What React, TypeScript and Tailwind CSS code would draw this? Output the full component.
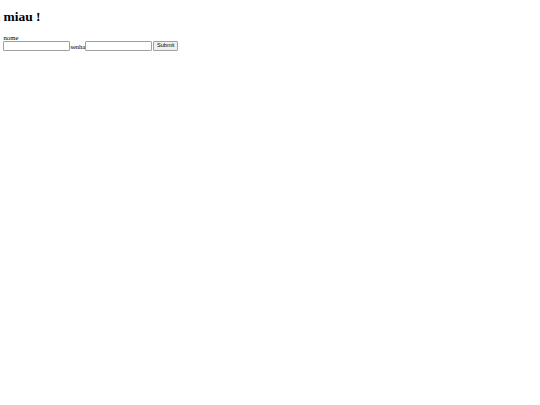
export default function App() {
  return (
    <div className="min-h-[405px] w-[540px] bg-white px-[3.4px] pt-[9px] font-['Liberation_Serif',serif] text-black">
      <h1 className="text-[13.5px] font-bold leading-[15.5px]">miau !</h1>
      <form className="mt-[9px]" onSubmit={(e) => e.preventDefault()}>
        <div className="text-[6.75px] leading-[7.8px]">nome</div>
        <div className="flex items-end text-[6.5px] leading-[7.8px]">
          <input
            type="text"
            className="h-[9.5px] w-[67px] rounded-[1px] border border-[#a0a0a0] bg-white"
          />
          <span className="pb-[0.5px]">senha</span>
          <input
            type="password"
            className="h-[9.5px] w-[67px] rounded-[1px] border border-[#a0a0a0] bg-white"
          />
          <button
            type="submit"
            className="ml-[1px] flex h-[9.5px] w-[25px] items-center justify-center rounded-[1px] border border-[#a0a0a0] bg-[#efefef] font-['Liberation_Sans',sans-serif] text-[5.6px] leading-none"
          >
            Submit
          </button>
        </div>
      </form>
    </div>
  );
}
